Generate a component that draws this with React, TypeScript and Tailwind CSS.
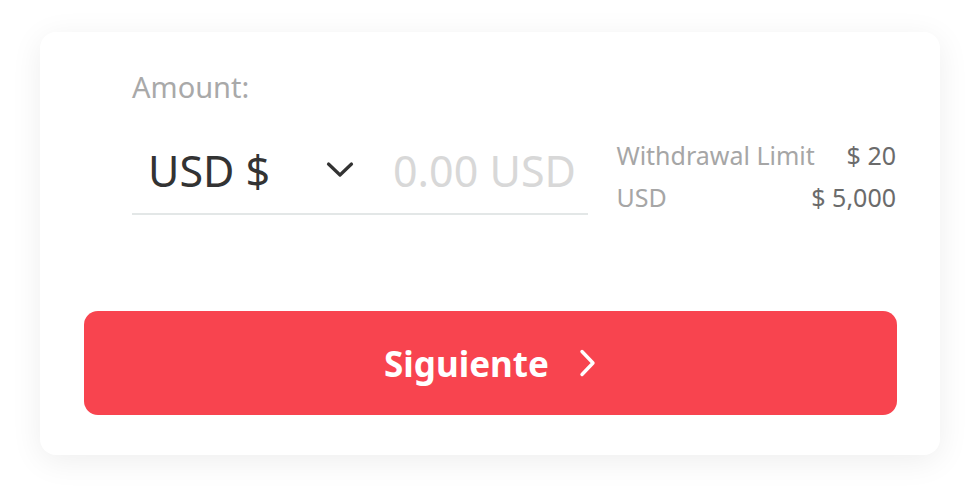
import React, { useState } from "react";

function ChevronDown() {
  return (
    <svg width="28" height="18" viewBox="0 0 28 18" fill="none">
      <path d="M2.5 3 L14 14 L25.5 3" stroke="#333333" strokeWidth="3.2" strokeLinecap="round" strokeLinejoin="round" />
    </svg>
  );
}

function ChevronRight() {
  return (
    <svg width="18" height="28" viewBox="0 0 18 28" fill="none">
      <path d="M3 2.5 L14 14 L3 25.5" stroke="#ffffff" strokeWidth="3.4" strokeLinecap="round" strokeLinejoin="round" />
    </svg>
  );
}

export default function App() {
  const [amount, setAmount] = useState("");

  return (
    <div
      className="w-[980px] h-[503px] bg-white pt-[32px] pl-[40px]"
      style={{ fontFamily: '"Noto Sans", "Open Sans", Arial, sans-serif' }}
    >
      <div className="w-[900px] bg-white rounded-[16px] shadow-[0_6px_32px_rgba(0,0,0,0.07)] pt-[40px] pb-[40px] px-[44px]">
        <div className="flex pl-[48px]">
          <div className="w-[457px]">
            <label className="block text-[29px] leading-none text-[#a9a9a9]">Amount:</label>
            <div className="mt-[48px] flex items-center h-[42px] box-content border-b-2 border-[#e3e7e7] pb-[22px]">
              <button className="flex items-center w-[222px] h-[42px] pl-[16px] justify-between">
                <span className="text-[43px] leading-none text-[#333333]">USD $</span>
                <ChevronDown />
              </button>
              <input
                value={amount}
                onChange={(e) => setAmount(e.target.value)}
                placeholder="0.00 USD"
                className="ml-[39px] w-[195px] h-[42px] text-[43px] leading-none text-[#333333] placeholder:text-[#d8d8d8] outline-none bg-transparent"
              />
            </div>
          </div>
          <div className="ml-[28px] mt-[71px] w-[280px] text-[25px] leading-none">
            <div className="flex justify-between">
              <span className="text-[#a6a6a6]">Withdrawal Limit</span>
              <span className="text-[#6b6b6b]">$ 20</span>
            </div>
            <div className="flex justify-between mt-[17px]">
              <span className="text-[#a6a6a6]">USD</span>
              <span className="text-[#6b6b6b]">$ 5,000</span>
            </div>
          </div>
        </div>
        <button className="mt-[96px] w-[813px] h-[104px] rounded-[14px] bg-[#f8444f] flex items-center justify-center gap-[30px]">
          <span className="text-[35px] font-bold text-white leading-none">Siguiente</span>
          <ChevronRight />
        </button>
      </div>
    </div>
  );
}
